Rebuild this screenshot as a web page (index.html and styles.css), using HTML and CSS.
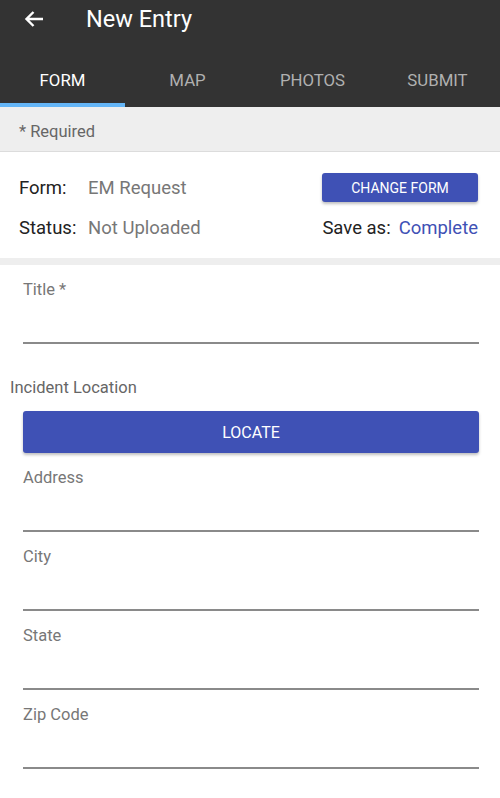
FILE: index.html
```html
<!DOCTYPE html>
<html lang="en">
<head>
    <link rel="stylesheet" href="styles.css">
</head>
<body>
    <div class="header">
        <div class="toolbar">
            <svg class="back" width="20" height="18" viewBox="0 0 20 18">
                <path d="M19 9H3M9.5 2L2.5 9l7 7" fill="none" stroke="#fff" stroke-width="2.4"/>
            </svg>
            <div class="toolbar-title">New Entry</div>
        </div>
        <div class="tabs">
            <div class="tab active">FORM</div>
            <div class="tab">MAP</div>
            <div class="tab">PHOTOS</div>
            <div class="tab">SUBMIT</div>
        </div>
    </div>

    <div class="required">* Required</div>

    <div class="info">
        <div class="info-row">
            <div><span class="key">Form:</span><span class="value">EM Request</span></div>
            <button class="btn btn-small">CHANGE FORM</button>
        </div>
        <div class="info-row">
            <div><span class="key">Status:</span><span class="value">Not Uploaded</span></div>
            <div class="save">Save as:<span class="link">Complete</span></div>
        </div>
    </div>

    <div class="form">
        <div class="field">
            <div class="label">Title *</div>
        </div>
        <div class="section-label">Incident Location</div>
        <button class="btn btn-wide">LOCATE</button>
        <div class="field">
            <div class="label">Address</div>
        </div>
        <div class="field">
            <div class="label">City</div>
        </div>
        <div class="field">
            <div class="label">State</div>
        </div>
        <div class="field">
            <div class="label">Zip Code</div>
        </div>
    </div>
</body>
</html>
```

FILE: styles.css
```css
body {
    margin: 0;
    font-family: Roboto, "Liberation Sans", sans-serif;
    background: #fff;
    color: #222;
}

.header {
    background: #333333;
    height: 107px;
    display: flex;
    flex-direction: column;
}

.toolbar {
    height: 37px;
    display: flex;
    align-items: center;
    padding-left: 24px;
}

.back {
    display: block;
}

.toolbar-title {
    color: #fff;
    font-size: 23.5px;
    margin-left: 42px;
}

.tabs {
    display: flex;
    flex: 1;
}

.tab {
    flex: 1;
    display: flex;
    align-items: center;
    justify-content: center;
    color: #b0b0b0;
    font-size: 16.8px;
    border-bottom: 4px solid transparent;
    padding-top: 20px;
}

.tab.active {
    color: #fff;
    border-bottom-color: #64b5f6;
}

.required {
    background: #eeeeee;
    border-bottom: 1px solid #dcdcdc;
    height: 44px;
    line-height: 50px;
    padding-left: 19px;
    font-size: 16.5px;
    color: #666;
}

.info {
    padding: 21px 22px 5px 19px;
    border-bottom: 7px solid #eeeeee;
}

.info-row {
    display: flex;
    justify-content: space-between;
    align-items: center;
    height: 29px;
    margin-bottom: 11px;
    font-size: 18.5px;
}

.key {
    display: inline-block;
    width: 69px;
    color: #222;
}

.value {
    color: #777;
}

.save {
    color: #222;
}

.link {
    color: #3f51b5;
    margin-left: 8px;
}

.btn {
    background: #3f51b5;
    color: #fff;
    border: none;
    border-radius: 3px;
    font-family: inherit;
    box-shadow: 0 2px 3px rgba(0, 0, 0, 0.25);
}

.btn-small {
    width: 156px;
    height: 29px;
    font-size: 14px;
}

.btn-wide {
    display: block;
    margin: 0 21px 0 23px;
    width: 456px;
    height: 42px;
    font-size: 16px;
}

.field {
    margin: 0 21px 0 23px;
    height: 79px;
    padding-top: 16px;
    border-bottom: 2px solid #8a8a8a;
    box-sizing: border-box;
}

.label {
    font-size: 16.5px;
    line-height: 18px;
    color: #777;
}

.section-label {
    font-size: 16.5px;
    line-height: 18px;
    color: #666;
    padding-left: 10px;
    margin: 35px 0 14px;
}
```
